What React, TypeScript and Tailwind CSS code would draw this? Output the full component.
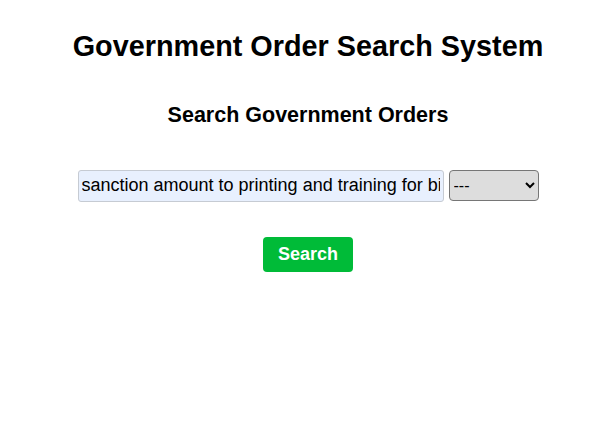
import React from "react";

export default function App() {
  return (
    <div className="min-h-[421px] w-full bg-white flex flex-col items-center text-black pl-[22px]" style={{ fontFamily: '"Liberation Sans", Arial, sans-serif' }}>
      <h1 className="mt-[30px] text-[28.8px] font-bold leading-[1.15]">Government Order Search System</h1>
      <h2 className="mt-[40px] text-[21.5px] font-bold leading-[1.15]">Search Government Orders</h2>
      <div className="mt-[42px] flex items-center gap-[5px]">
        <input
          type="text"
          defaultValue="sanction amount to printing and training for bi"
          className="w-[366px] h-[32px] px-[3px] text-[18px] bg-[#e8f0fe] border border-[#c6cbd3] rounded-[3px] text-black outline-none"
        />
        <select className="w-[90px] h-[31px] text-[16px] bg-[#dddddd] border border-[#767676] rounded-[4px] text-black pl-0">
          <option>---</option>
        </select>
      </div>
      <button className="mt-[35px] w-[90px] h-[35px] bg-[#00bb38] text-white text-[18px] font-bold rounded-[4px]">
        Search
      </button>
    </div>
  );
}
